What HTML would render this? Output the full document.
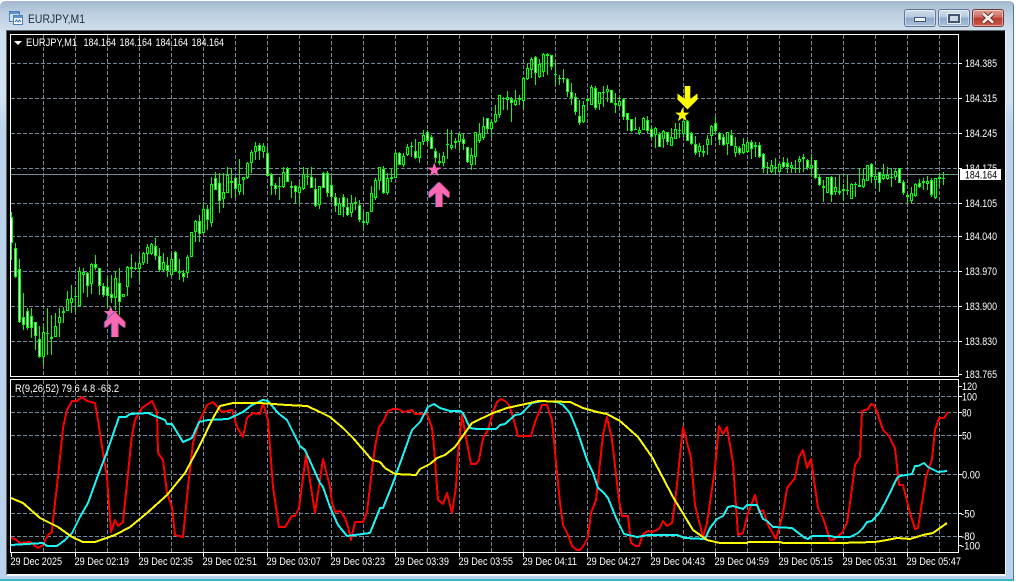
<!DOCTYPE html>
<html><head><meta charset="utf-8"><title>EURJPY,M1</title>
<style>
html,body{margin:0;padding:0;background:#fff}
#w{position:absolute;left:0;top:0;width:1016px;height:582px;overflow:hidden;background:#fff}
#f{position:absolute;left:0;top:1px;width:1013px;height:580px;border-radius:5px 5px 0 0;background:linear-gradient(180deg,#a3b8d0 0,#bccde0 12px,#d0dfed 30px,#d2e1f0 100px,#bbd2ea 125px,#b9d1ea 100%);border-right:1px solid #4a7f98;border-bottom:2px solid #3fb4c8;box-sizing:content-box;height:578px}
#b{position:absolute;left:6px;top:30px;width:998px;height:543px;background:#000;border-left:1px solid #5a6570;border-top:1px solid #5a6570;border-right:1px solid #eef3f8;border-bottom:2px solid #f4f7fa}
.btn{position:absolute;top:9px;width:30px;height:16px;border:1px solid #5f7690;border-radius:3px;background:linear-gradient(180deg,#d3dfec 0,#b4c7dc 45%,#8ea9c8 50%,#a9c0da 100%);box-shadow:inset 0 0 0 1px rgba(255,255,255,.45)}
.x{background:linear-gradient(180deg,#dfa097 0,#cf6a5e 45%,#b93d30 50%,#c9584a 100%);border-color:#6e3a36}
svg{position:absolute;left:0;top:0}
text{font-family:"Liberation Sans",sans-serif;font-size:11px;fill:#fff}
</style></head><body>
<div id="w"><div id="f"></div><div id="b"></div>
<div class="btn" style="left:904px"><div style="position:absolute;left:9px;top:7px;width:10px;height:3px;background:#eef3f8;border:1px solid #41566e"></div></div>
<div class="btn" style="left:938px"><div style="position:absolute;left:9px;top:4px;width:8px;height:5px;border:2px solid #41566e;background:#c9d7e6;outline:1px solid #e6edf5"></div></div>
<div class="btn x" style="left:972px"><svg width="30" height="16" style="left:0;top:0"><path d="M10 3.5 20 12.5M20 3.5 10 12.5" stroke="#5a2a28" stroke-width="4.4"/><path d="M10 3.5 20 12.5M20 3.5 10 12.5" stroke="#f2ece9" stroke-width="2.8"/></svg></div>
<svg id="s" width="1016" height="582" viewBox="0 0 1016 582" xmlns="http://www.w3.org/2000/svg">
<defs>
<polygon id="st" points="0,-7.5 1.76,-2.43 7.13,-2.32 2.85,.93 4.41,6.07 0,3 -4.41,6.07 -2.85,.93 -7.13,-2.32 -1.76,-2.43"/>
<polygon id="au" points="0,0 10,10 10,16 3,10.5 3,25 -3,25 -3,10.5 -10,16 -10,10"/>
<polygon id="ad" points="0,0 -10,-10 -10,-16 -2.8,-10.5 -2.8,-23.5 2.8,-23.5 2.8,-10.5 10,-16 10,-10"/>
</defs>
<!-- title bar icon and caption -->
<rect x="9.5" y="11.5" width="10" height="10" fill="#cfe3f5" stroke="#4f7fb5"/><rect x="10" y="12" width="9" height="2" fill="#5b93d0"/>
<rect x="13.5" y="15.5" width="9" height="9" fill="#f4f9fd" stroke="#4f7fb5"/><rect x="14" y="16" width="8" height="2" fill="#5b93d0"/>
<path d="M15 22 16.5 20 18 22 19.5 20 21 22" fill="none" stroke="#3a6ea8"/>
<text x="28" y="23" textLength="57" lengthAdjust="spacingAndGlyphs" style="font-size:12px;fill:#1f2f40">EURJPY,M1</text>
<!-- grid -->
<g id="grid" stroke="#778899" stroke-dasharray="4 2" shape-rendering="crispEdges" fill="none">
<path d="M11 63.5H958M11 98.5H958M11 133.5H958M11 168.5H958M11 203.5H958M11 236.5H958M11 271.5H958M11 306.5H958M11 341.5H958"/>
<path d="M11 396.5H958M11 412.5H958M11 435.5H958M11 474.5H958M11 513.5H958M11 536.5H958"/>
<path id="vg" d=""/>
</g>
<path d="M11 174.5H958" stroke="#778899" shape-rendering="crispEdges"/>
<g id="c" shape-rendering="crispEdges"></g>
<!-- frames -->
<g stroke="#fff" fill="none" shape-rendering="crispEdges">
<rect x="10.5" y="34.5" width="948" height="342"/>
<rect x="10.5" y="379.5" width="948" height="173"/>
<path id="tk" d=""/>
</g>
<!-- arrows and stars -->
<use href="#st" x="110.6" y="313.5" fill="#3d5fb0"/><use href="#st" x="110.9" y="313.5" fill="#ff69b4"/>
<use href="#au" x="113.8" y="312" fill="#3d5fb0"/><use href="#au" x="115.8" y="312" fill="#a8305c"/><use href="#au" x="114.8" y="312" fill="#ff69b4"/>
<use href="#st" x="434.3" y="170" fill="#ff69b4"/>
<use href="#au" x="438" y="182" fill="#3d5fb0"/><use href="#au" x="440" y="182" fill="#a8305c"/><use href="#au" x="439" y="182" fill="#ff69b4"/>
<use href="#ad" x="687.5" y="109.5" fill="#ffff00"/>
<use href="#st" x="682.3" y="115" fill="#ffff00"/>
<!-- indicator -->
<g fill="none" stroke-width="2" stroke-linejoin="round" shape-rendering="crispEdges">
<polyline stroke="#ff0000" points="11,538 15,539 20,543 30,542 38,548 43,545 48,535 52,532 53,520 58,477 63,428 67,410 72,401 77,401 82,397 87,401 95,403 98,420 103,453 107,477 111,532 115,520 118,526 123,522 127,483 132,435 135,420 142,408 152,401 157,412 158,453 163,460 167,493 172,507 175,535 183,537 188,487 193,443 200,420 207,405 213,402 222,412 232,410 237,427 243,437 247,418 253,413 260,414 263,403 268,420 273,487 279,527 285,527 292,516 295,516 299,508 306,455 315,513 323,459 330,487 332,503 335,512 340,511 345,518 348,527 351,540 355,522 363,522 367,512 372,470 375,447 379,427 383,422 388,411 393,409 398,409 404,412 412,410 415,414 427,414 432,428 434,447 438,500 443,504 447,493 452,513 456,487 458,453 462,415 467,443 471,464 476,464 479,460 483,438 488,430 493,412 497,402 501,399 505,401 509,405 513,417 518,436 531,436 535,422 542,405 547,405 552,420 557,473 560,503 563,525 568,535 572,546 577,550 580,550 584,545 588,537 591,513 596,500 603,435 607,417 612,440 619,500 622,516 628,516 631,543 636,546 639,546 643,534 648,531 652,532 659,529 663,521 667,526 672,523 675,503 683,427 691,458 695,505 703,537 707,523 715,468 719,426 723,434 727,427 733,463 738,535 743,533 748,513 755,495 759,512 763,510 768,525 776,539 783,513 787,488 795,478 799,457 803,450 807,468 811,459 818,508 823,518 830,540 833,540 842,533 847,523 850,503 855,465 860,457 862,411 868,409 871,404 874,405 877,412 883,430 889,436 895,448 899,485 903,485 910,513 915,529 918,528 926,477 932,459 935,430 939,418 944,418 948,412"/>
<polyline stroke="#19f5f5" points="11,545 43,543 47,546 57,546 65,540 72,533 80,517 88,503 97,478 107,452 119,417 126,417 130,414 148,413 155,416 165,420 167,424 172,424 183,442 192,438 199,422 208,420 228,419 243,412 252,405 263,400 268,401 278,413 287,420 300,446 305,450 320,483 323,487 330,507 338,525 347,536 370,533 380,508 383,508 393,483 412,430 420,422 428,407 434,404 440,408 450,411 460,411 463,413 470,428 477,429 496,429 500,425 505,424 515,415 521,414 532,403 543,401 557,402 563,405 570,413 577,430 587,460 593,473 598,488 603,492 608,498 617,520 624,534 637,537 648,535 677,535 685,538 705,539 710,528 717,519 723,516 728,507 733,506 743,509 747,505 757,505 763,519 767,521 773,527 792,528 805,538 808,539 812,536 830,536 835,537 850,537 858,533 863,528 867,522 872,521 880,512 888,497 897,478 900,476 912,474 915,466 918,466 924,463 928,467 938,472 947,471"/>
<polyline stroke="#ffff00" points="11,498 23,503 40,518 58,527 72,537 83,542 95,542 115,535 130,527 147,513 167,495 185,473 200,445 213,418 220,406 233,403 260,403 287,405 307,406 320,412 330,417 343,428 353,438 372,460 380,462 385,468 395,474 416,475 420,469 430,464 437,458 445,455 455,447 472,423 493,413 507,408 530,403 538,401 570,402 583,408 597,412 607,414 620,421 638,437 652,457 673,497 693,530 707,540 720,543 747,543 748,542 780,542 783,543 840,543 875,542 887,540 897,538 910,539 923,535 933,533 947,523"/>
</g>
<!-- price scale -->
<g>
<text x="965" y="67" textLength="32" lengthAdjust="spacingAndGlyphs">184.385</text>
<text x="965" y="102" textLength="32" lengthAdjust="spacingAndGlyphs">184.315</text>
<text x="965" y="137" textLength="32" lengthAdjust="spacingAndGlyphs">184.245</text>
<text x="965" y="172" textLength="32" lengthAdjust="spacingAndGlyphs">184.175</text>
<text x="965" y="207" textLength="32" lengthAdjust="spacingAndGlyphs">184.105</text>
<text x="965" y="240" textLength="32" lengthAdjust="spacingAndGlyphs">184.040</text>
<text x="965" y="275" textLength="32" lengthAdjust="spacingAndGlyphs">183.970</text>
<text x="965" y="310" textLength="32" lengthAdjust="spacingAndGlyphs">183.900</text>
<text x="965" y="345" textLength="32" lengthAdjust="spacingAndGlyphs">183.830</text>
<text x="965" y="378" textLength="32" lengthAdjust="spacingAndGlyphs">183.765</text>
<rect x="960" y="169" width="41" height="11" fill="#fff"/>
<text x="965" y="178.5" textLength="32" lengthAdjust="spacingAndGlyphs" style="fill:#000">184.164</text>
<text x="962" y="390" textLength="15" lengthAdjust="spacingAndGlyphs">120</text>
<text x="962" y="400.5" textLength="15" lengthAdjust="spacingAndGlyphs">100</text>
<text x="962" y="416.5" textLength="9.5" lengthAdjust="spacingAndGlyphs">80</text>
<text x="962" y="439.5" textLength="9.5" lengthAdjust="spacingAndGlyphs">50</text>
<text x="962" y="478.5" textLength="18" lengthAdjust="spacingAndGlyphs">0.00</text>
<text x="961" y="517.5" textLength="14" lengthAdjust="spacingAndGlyphs">-50</text>
<text x="961" y="540" textLength="14" lengthAdjust="spacingAndGlyphs">-80</text>
<text x="961" y="549.5" textLength="19" lengthAdjust="spacingAndGlyphs">-100</text>
</g>
<!-- time scale -->
<g>
<text x="10.5" y="565" textLength="51.5" lengthAdjust="spacingAndGlyphs">29 Dec 2025</text>
<text x="74.5" y="565" textLength="54.5" lengthAdjust="spacingAndGlyphs">29 Dec 02:19</text>
<text x="138.5" y="565" textLength="54.5" lengthAdjust="spacingAndGlyphs">29 Dec 02:35</text>
<text x="202.5" y="565" textLength="54.5" lengthAdjust="spacingAndGlyphs">29 Dec 02:51</text>
<text x="266.5" y="565" textLength="54.5" lengthAdjust="spacingAndGlyphs">29 Dec 03:07</text>
<text x="330.5" y="565" textLength="54.5" lengthAdjust="spacingAndGlyphs">29 Dec 03:23</text>
<text x="394.5" y="565" textLength="54.5" lengthAdjust="spacingAndGlyphs">29 Dec 03:39</text>
<text x="458.5" y="565" textLength="54.5" lengthAdjust="spacingAndGlyphs">29 Dec 03:55</text>
<text x="522.5" y="565" textLength="54.5" lengthAdjust="spacingAndGlyphs">29 Dec 04:11</text>
<text x="586.5" y="565" textLength="54.5" lengthAdjust="spacingAndGlyphs">29 Dec 04:27</text>
<text x="650.5" y="565" textLength="54.5" lengthAdjust="spacingAndGlyphs">29 Dec 04:43</text>
<text x="714.5" y="565" textLength="54.5" lengthAdjust="spacingAndGlyphs">29 Dec 04:59</text>
<text x="778.5" y="565" textLength="54.5" lengthAdjust="spacingAndGlyphs">29 Dec 05:15</text>
<text x="842.5" y="565" textLength="54.5" lengthAdjust="spacingAndGlyphs">29 Dec 05:31</text>
<text x="906.5" y="565" textLength="54.5" lengthAdjust="spacingAndGlyphs">29 Dec 05:47</text>
</g>
<!-- chart labels -->
<polygon points="14,41 22,41 18,45" fill="#fff"/>
<text x="26" y="46" textLength="51" lengthAdjust="spacingAndGlyphs">EURJPY,M1</text>
<text x="83.5" y="46" textLength="32.5" lengthAdjust="spacingAndGlyphs">184.164</text>
<text x="119.5" y="46" textLength="32.5" lengthAdjust="spacingAndGlyphs">184.164</text>
<text x="155.5" y="46" textLength="32.5" lengthAdjust="spacingAndGlyphs">184.164</text>
<text x="191.5" y="46" textLength="32.5" lengthAdjust="spacingAndGlyphs">184.164</text>
<text x="15" y="392" textLength="104" lengthAdjust="spacingAndGlyphs">R(9,26,52) 79.6 4.8 -63.2</text>
</svg>
</div>
<script>
(function(){
var S=[
[140,"230,310,215,360,1;325,410,310,415,1;388,545,358,550,1;530,555,458,570,1;513,565,505,570,1;527,563,505,595,1;545,587,545,630,1;598,650,558,655,1;575,650,555,675,0;578,583,505,645,0;592,596,525,645,0;558,590,520,590,0;530,550,505,590,0;512,520,500,550,0;478,512,453,513,0;475,490,435,520,0;468,470,440,515,0;393,498,380,498,0;397,405,385,460,0;400,437,395,472,1;372,433,368,462,0;373,385,345,390,1;385,437,385,465,1;438,465,430,470,1;442,467,412,505,1;463,475,405,490,1;415,475,393,510,0;428,485,385,525,1;462,470,462,470,0;382,440,378,468,0;382,386,342,415,0;384,388,365,390,0;370,387,345,425,0;340,370,335,375,0;322,342,313,372,0;313,342,310,345,0;318,347,295,360,1;348,390,325,395,1;367,390,340,395,0;375,392,350,410,1;358,404,340,410,0;337,392,332,395,1;392,398,358,420,0;400,410,390,425,1;352,398,345,415,0;277,350,277,352,0;243,277,240,305,0;244,282,225,305,1;208,278,185,278,0;208,240,195,270,1;133,250,110,260,0;115,150,95,150,1;130,182,98,220,1;157,177,100,205,0;105,160,80,160,0;122,128,85,175,0;115,147,110,175,1;133,155,58,165,0;112,120,110,165,0;70,115,65,118,0;37,68,30,100,0;18,35,5,60,0;16,32,10,60,1;18,36,8,55,0;38,107,20,107,1;103,137,100,165,1"],
[50,"405,418,400,435,1;407,412,380,450,0;365,410,352,415,0;355,395,350,397,1;408,415,393,445,0;408,425,405,460,1;412,428,398,462,0;373,418,350,420,0;378,380,355,405,0;382,413,352,415,1;418,468,385,470,1;408,464,408,476,0;370,413,365,415,1;370,428,362,440,1;406,440,380,455,1;442,468,430,485,1;460,495,445,495,0;442,470,432,500,1;472,495,445,497,1;460,488,435,500,0;457,461,440,480,0;466,510,450,515,1;514,518,485,535,0;487,520,485,525,0;430,485,408,485,0;391,445,385,450,0;352,392,352,420,0;358,428,348,432,1;385,430,370,435,0;380,388,355,395,0;310,383,305,385,0;308,344,305,345,1;317,346,310,350,0;290,315,282,318,0;287,292,275,320,0;302,323,268,328,1;277,325,275,340,0;256,275,240,285,0;245,272,240,285,1;262,296,256,298,1;302,323,295,338,1;332,338,308,345,0;317,340,305,348,0;283,286,238,328,0;284,293,240,300,0;272,280,264,298,0;253,275,250,300,0;266,283,250,300,1;292,335,292,340,1;316,344,295,360,0;247,320,245,345,0;251,272,218,278,0;229,265,200,270,0;205,236,205,250,1;217,236,210,260,0;193,215,165,220,0;136,195,135,205,0;144,146,140,180,0;142,150,123,180,0;146,160,140,215,1;150,164,120,168,0;145,151,135,165,0;85,152,80,178,0;55,88,40,90,0;27,60,20,85,0;22,70,18,105,1;42,80,28,85,0;13,65,10,80,0;13,19,8,75,0;16,52,14,60,1;72,76,38,105,0;83,88,75,105,0;83,86,58,100,0;88,125,85,140,1;125,145,100,165,1;140,185,130,195,1;198,220,150,225,1;165,215,152,220,0;148,152,145,170,0;112,165,105,165,0;115,173,108,180,1;127,163,127,180,0;125,128,108,170,0"],
[80,"28,35,15,65,0;30,68,30,70,1;70,74,40,100,0;63,77,50,80,0;57,110,55,120,1;100,120,100,152,1;118,152,118,155,1;146,148,110,150,0;150,158,140,165,0;115,150,110,150,0;120,152,108,160,1;148,170,140,175,1;145,165,140,205,0;162,200,155,200,1;153,176,150,205,0;157,186,155,195,1;172,197,145,198,0;148,176,128,178,0;150,154,130,175,0;123,162,123,170,0;124,182,120,183,1;160,192,155,195,1;193,220,168,225,1;198,215,188,230,0;214,218,195,232,0;177,194,165,225,0;138,167,135,195,0;130,152,112,158,1;160,180,155,195,1;172,194,162,198,1;157,192,155,225,0;165,197,150,198,1;198,218,170,232,0;205,220,198,225,1;192,218,175,222,0;187,216,180,218,0;187,208,180,237,1;196,200,185,230,0;196,230,185,235,1;223,265,220,280,1;261,265,245,282,0;256,275,240,278,0;262,265,235,285,0;252,275,245,278,0;247,262,230,265,1;250,262,235,280,1;254,265,245,280,0;265,267,240,280,0;238,245,228,280,0;232,238,222,275,0;240,265,238,270,1;254,264,222,290,0;241,295,240,297,1;292,315,285,318,1;317,325,300,365,0;292,340,290,340,0;290,345,288,365,1;322,335,290,345,0;334,340,285,345,0;328,332,312,362,0;330,332,285,345,0;312,356,310,358,0;312,316,305,350,0;316,322,265,322,0;298,320,265,325,0;256,302,255,303,0;253,290,250,310,1;288,300,260,325,0;277,310,275,335,1;285,296,252,300,0;285,297,262,300,0;290,292,265,320,0;274,292,268,300,0;265,308,265,310,1;305,338,300,345,1;344,352,338,368,0;340,362,320,368,0;312,347,310,350,0;310,322,298,325,1;304,309,295,330,0;304,312,288,330,0;300,346,295,350,1;295,355,295,358,0;290,296,280,320,0;294,298,275,315,0;283,285,283,285,0"]
];
var g="",w="",k="",i=0;
function r(x,y,W,h){return "M"+x+" "+y+"h"+W+"v"+h+"h-"+W+"z";}
S.forEach(function(s){
 s[1].split(";").forEach(function(q){
  var a=q.split(",").map(Number),o=s[0];
  var t=Math.round(o+a[0]/3),b=Math.round(o+a[1]/3),u=Math.round(o+a[2]/3),d=Math.round(o+a[3]/3);
  if(b<=t)b=t+1;
  if(u>t)u=t; if(d<b)d=b;
  var x=11+4*i;
  g+=r(x,u,1,d-u)+r(x-1,t,3,b-t);
  if(b-t>=3){ if(a[4]) w+=r(x,t+1,1,b-t-2); else k+=r(x,t+1,1,b-t-2); }
  i++;
 });
});
document.getElementById("c").innerHTML='<path fill="#00ff00" d="'+g+'"/><path fill="#fff" d="'+w+'"/><path fill="#000" d="'+k+'"/>';
var v="",tk="",x;
for(x=43;x<958;x+=32){v+="M"+(x+.5)+" 35V376M"+(x+.5)+" 380V552";}
document.getElementById("vg").setAttribute("d",v);
for(x=11;x<958;x+=64){tk+="M"+(x+.5)+" 553V557";}
[63,98,133,168,203,236,271,306,341,374,386,396,412,435,474,513,536,545].forEach(function(y){tk+="M959 "+(y+.5)+"H962";});
document.getElementById("tk").setAttribute("d",tk);
})();
</script>
</body></html>
